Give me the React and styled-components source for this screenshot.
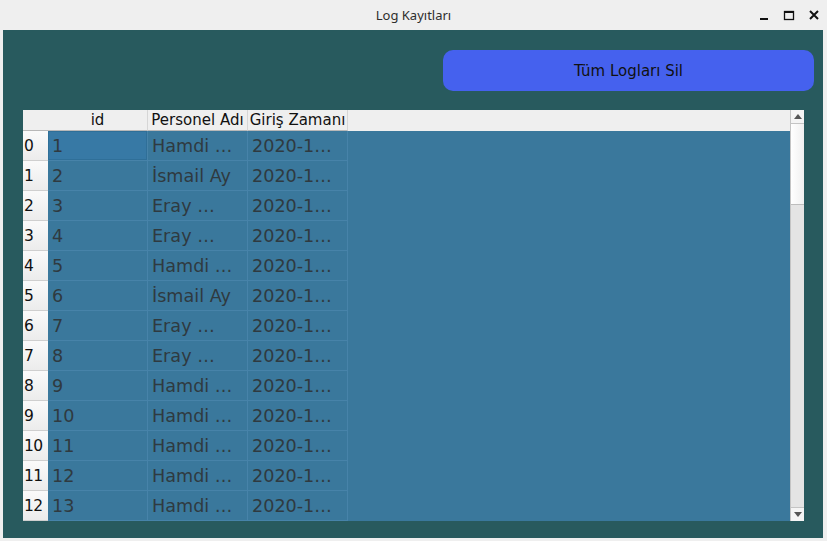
import React from "react";
import styled, { createGlobalStyle } from "styled-components";

const GlobalStyle = createGlobalStyle`
  html, body {
    margin: 0;
    padding: 0;
    background: #efefef;
    font-family: "DejaVu Sans", sans-serif;
  }
`;

const Frame = styled.div`
  display: flex;
  flex-direction: column;
  width: 827px;
  height: 541px;
  background: #efefef;
`;

const TitleBar = styled.div`
  position: relative;
  height: 30px;
  flex-shrink: 0;
  display: flex;
  align-items: center;
  justify-content: center;
  font-family: "Noto Sans", sans-serif;
  font-size: 13px;
  color: #2e2e2e;
`;

const Controls = styled.div`
  position: absolute;
  right: 6px;
  top: 0;
  height: 30px;
  display: flex;
  align-items: center;
  gap: 11px;
`;

const Window = styled.div`
  flex: 1;
  min-height: 0;
  margin: 0 4px 3px 3px;
  background: #285a5e;
  display: flex;
  flex-direction: column;
  padding: 20px 9px 17px 20px;
  gap: 19px;
`;

const Toolbar = styled.div`
  display: flex;
  flex-shrink: 0;
  justify-content: flex-end;
`;

const Button = styled.button`
  width: 371px;
  height: 41px;
  border: none;
  border-radius: 10px;
  background: #4561ee;
  color: #111;
  font-family: "DejaVu Sans", sans-serif;
  font-size: 15px;
`;

const Table = styled.div`
  flex: 1;
  min-height: 0;
  margin-right: 10px;
  display: flex;
  overflow: hidden;
  background: #3a789c;
`;

const Viewport = styled.div`
  flex: 1;
  display: flex;
  flex-direction: column;
  overflow: hidden;
`;

const HeaderRow = styled.div`
  display: grid;
  grid-template-columns: 25px 100px 100px 100px 1fr;
  height: 21px;
  flex-shrink: 0;
  background: #efefef;
`;

const HeadCell = styled.div`
  display: flex;
  align-items: center;
  justify-content: center;
  font-size: 15px;
  color: #111;
  white-space: nowrap;
  overflow: hidden;
  border-right: ${({ $last }) => ($last ? "none" : "1px solid #d6d6d6")};
  border-bottom: ${({ $fill }) => ($fill ? "none" : "1px solid #b8b8b8")};
`;

const Row = styled.div`
  display: grid;
  grid-template-columns: 25px 100px 100px 100px 1fr;
  height: 30px;
  flex-shrink: 0;
`;

const RowHead = styled.div`
  display: flex;
  align-items: center;
  padding-left: 1px;
  font-size: 15.5px;
  color: #111;
  background: linear-gradient(#fafafa, #ececec);
  border-bottom: 1px solid #cfcfcf;
  letter-spacing: -0.5px;
`;

const Cell = styled.div`
  display: flex;
  align-items: center;
  padding-left: 4px;
  font-size: 17.6px;
  color: #2f3a40;
  white-space: nowrap;
  overflow: hidden;
  border-right: 1px solid #4783a9;
  border-bottom: 1px solid #4783a9;
  background: ${({ $current }) => ($current ? "#3779a5" : "transparent")};
  box-shadow: ${({ $current }) =>
    $current ? "inset 0 0 0 1px #2f6f98" : "none"};
`;

const ScrollBar = styled.div`
  width: 14px;
  display: flex;
  flex-direction: column;
  background: #e4e4e4;
  border-left: 1px solid #c4c4c4;
  box-sizing: border-box;
`;

const Arrow = styled.div`
  height: 13px;
  display: flex;
  align-items: center;
  justify-content: center;
  background: #f4f4f4;
  border-bottom: ${({ $down }) => ($down ? "none" : "1px solid #c4c4c4")};
  border-top: ${({ $down }) => ($down ? "1px solid #c4c4c4" : "none")};
`;

const Handle = styled.div`
  height: 80px;
  background: linear-gradient(90deg, #ffffff, #f0f0f0);
  border-bottom: 1px solid #bdbdbd;
`;

const Track = styled.div`
  flex: 1;
`;

const rows = [
  ["1", "Hamdi …"],
  ["2", "İsmail Ay"],
  ["3", "Eray …"],
  ["4", "Eray …"],
  ["5", "Hamdi …"],
  ["6", "İsmail Ay"],
  ["7", "Eray …"],
  ["8", "Eray …"],
  ["9", "Hamdi …"],
  ["10", "Hamdi …"],
  ["11", "Hamdi …"],
  ["12", "Hamdi …"],
  ["13", "Hamdi …"],
];

export default function App() {
  return (
    <Frame>
      <GlobalStyle />
      <TitleBar>
        Log Kayıtları
        <Controls>
          <svg width="14" height="14" viewBox="0 0 14 14">
            <rect x="3" y="10" width="8" height="2" fill="#111" />
          </svg>
          <svg width="14" height="14" viewBox="0 0 14 14">
            <rect x="2.5" y="3.5" width="9" height="8" fill="none" stroke="#111" strokeWidth="1.3" />
            <rect x="2.5" y="3.5" width="9" height="1.5" fill="#111" />
          </svg>
          <svg width="14" height="14" viewBox="0 0 14 14">
            <path d="M3 3 L11 11 M11 3 L3 11" stroke="#111" strokeWidth="2" />
          </svg>
        </Controls>
      </TitleBar>
      <Window>
        <Toolbar>
          <Button>Tüm Logları Sil</Button>
        </Toolbar>
        <Table>
          <Viewport>
            <HeaderRow>
              <HeadCell $last />
              <HeadCell>id</HeadCell>
              <HeadCell>Personel Adı</HeadCell>
              <HeadCell>Giriş Zamanı</HeadCell>
              <HeadCell $last $fill />
            </HeaderRow>
            {rows.map(([id, name], i) => (
              <Row key={i}>
                <RowHead>{i}</RowHead>
                <Cell $current={i === 0}>{id}</Cell>
                <Cell>{name}</Cell>
                <Cell>2020-1…</Cell>
                <div />
              </Row>
            ))}
          </Viewport>
          <ScrollBar>
            <Arrow>
              <svg width="8" height="5" viewBox="0 0 8 5">
                <path d="M0 5 L4 0 L8 5 Z" fill="#555" />
              </svg>
            </Arrow>
            <Handle />
            <Track />
            <Arrow $down>
              <svg width="8" height="5" viewBox="0 0 8 5">
                <path d="M0 0 L4 5 L8 0 Z" fill="#555" />
              </svg>
            </Arrow>
          </ScrollBar>
        </Table>
      </Window>
    </Frame>
  );
}
